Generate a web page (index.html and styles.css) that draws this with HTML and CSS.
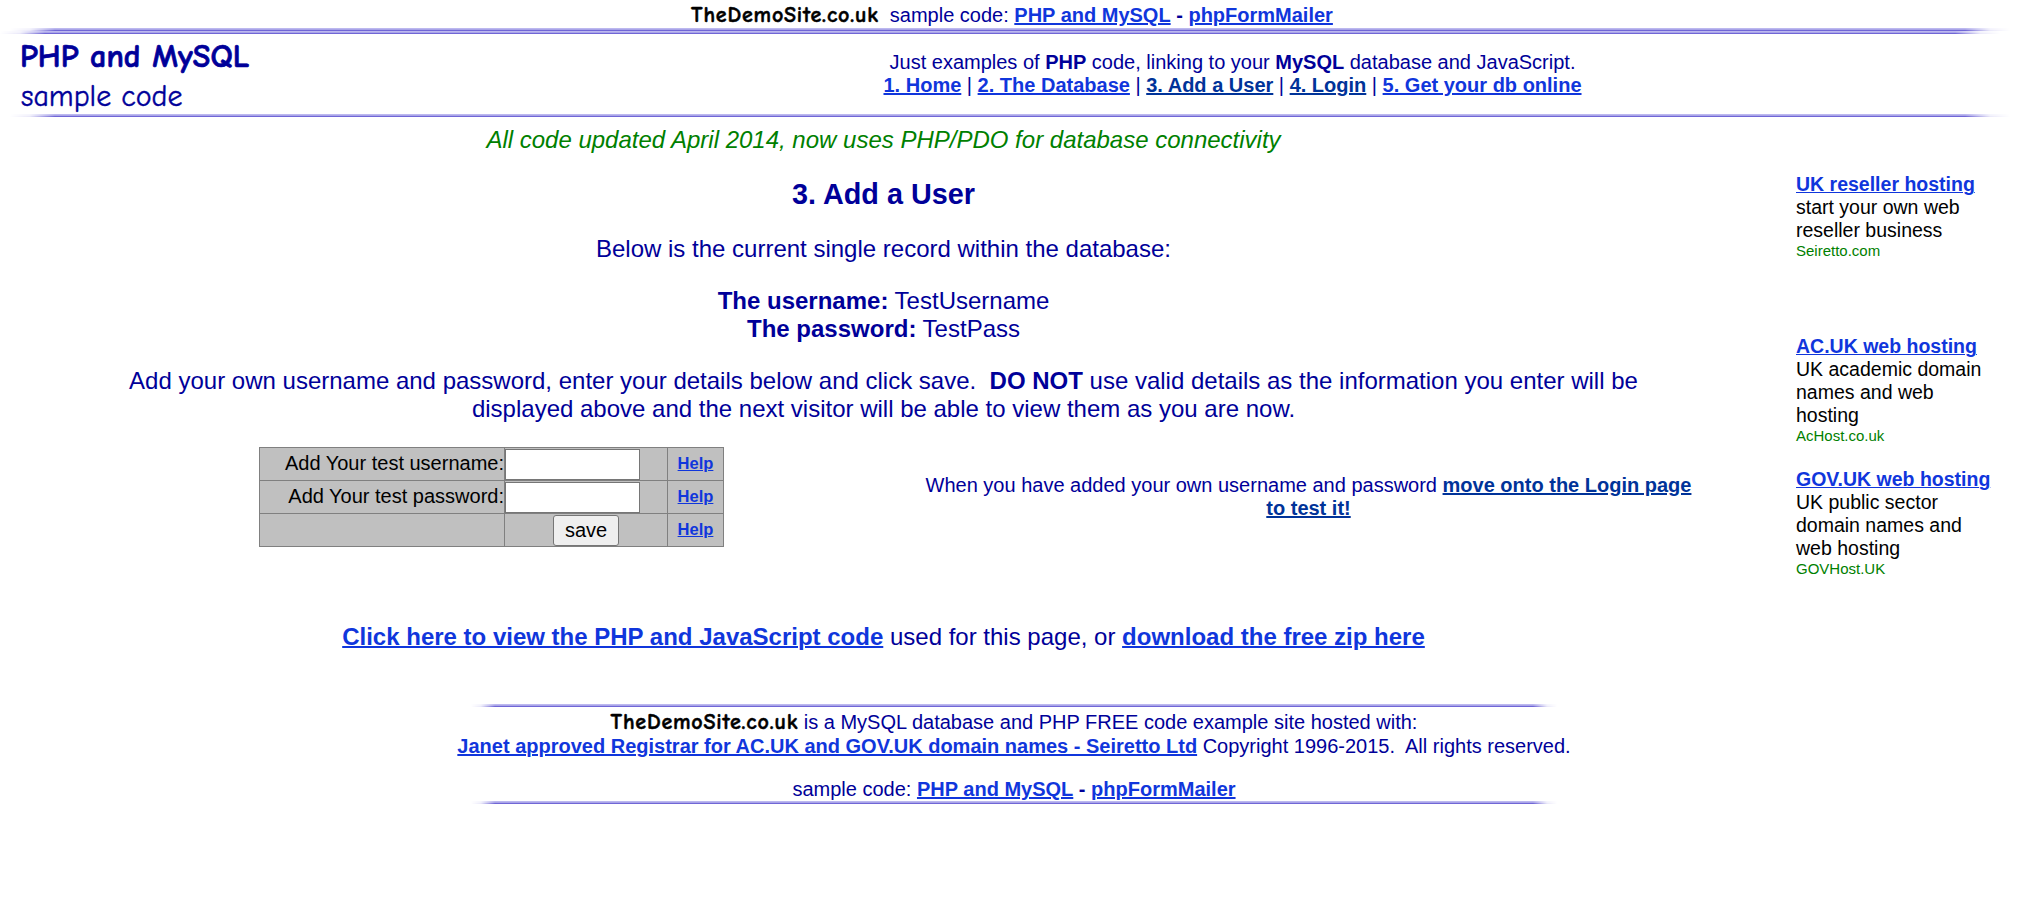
FILE: index.html
```html
<!DOCTYPE html>
<html lang="en">
<head>
<meta charset="utf-8">
<title>3. Add a User</title>
<link rel="stylesheet" href="styles.css">
</head>
<body>
<div class="topline"><span class="brand">TheDemoSite.co.uk</span>&nbsp; sample code: <a href="#">PHP and MySQL</a> <b>-</b> <a href="#">phpFormMailer</a></div>
<div class="rule rule-a"></div>
<div class="rule rule-b"></div>
<header class="header">
  <div class="logo"><div class="logo-main">PHP and MySQL</div><div class="logo-sub">sample code</div></div>
  <nav class="nav">
    <div class="intro">Just examples of <b>PHP</b> code, linking to your <b>MySQL</b> database and JavaScript.</div>
    <div class="links"><a href="#">1. Home</a> | <a href="#">2. The Database</a> | <a class="dark" href="#">3. Add a User</a> | <a class="dark" href="#">4. Login</a> | <a href="#">5. Get your db online</a></div>
  </nav>
</header>
<div class="rule rule-a"></div>
<div class="columns">
  <main class="main">
    <div class="notice">All code updated April 2014, now uses PHP/PDO for database connectivity</div>
    <h1 class="title">3. Add a User</h1>
    <p class="record-intro">Below is the current single record within the database:</p>
    <p class="record"><b>The username:</b> TestUsername<br><b>The password:</b> TestPass</p>
    <p class="instructions">Add your own username and password, enter your details below and click save.&nbsp; <b>DO NOT</b> use valid details as the information you enter will be<br>displayed above and the next visitor will be able to view them as you are now.</p>
    <div class="form-row">
      <form class="form">
        <table class="form-table">
          <tr><td class="label">Add Your test username:</td><td class="field"><input class="text" type="text"></td><td class="help"><a href="#">Help</a></td></tr>
          <tr><td class="label">Add Your test password:</td><td class="field"><input class="text" type="text"></td><td class="help"><a href="#">Help</a></td></tr>
          <tr><td class="label"></td><td class="submit"><button class="save" type="button">save</button></td><td class="help"><a href="#">Help</a></td></tr>
        </table>
      </form>
      <p class="next">When you have added your own username and password <a class="dark" href="#">move onto the Login page<br>to test it!</a></p>
    </div>
    <p class="source"><a href="#">Click here to view the PHP and JavaScript code</a> used for this page, or <a href="#">download the free zip here</a></p>
  </main>
  <aside class="ads">
    <div class="ad ad-first"><a href="#">UK reseller hosting</a><br>start your own web<br>reseller business<div class="site">Seiretto.com</div></div>
    <div class="ad ad-second"><a href="#">AC.UK web hosting</a><br>UK academic domain<br>names and web<br>hosting<div class="site">AcHost.co.uk</div></div>
    <div class="ad"><a href="#">GOV.UK web hosting</a><br>UK public sector<br>domain names and<br>web hosting<div class="site">GOVHost.UK</div></div>
  </aside>
</div>
<footer class="footer">
  <div class="rule rule-foot"></div>
  <div class="hosted"><span class="brand">TheDemoSite.co.uk</span> is a MySQL database and PHP FREE code example site hosted with:</div>
  <div class="rights"><a href="#">Janet approved Registrar for AC.UK and GOV.UK domain names - Seiretto Ltd</a> Copyright 1996-2015.&nbsp; All rights reserved.</div>
  <div class="samples">sample code: <a href="#">PHP and MySQL</a> <b>-</b> <a href="#">phpFormMailer</a></div>
  <div class="rule rule-foot"></div>
</footer>
</body>
</html>
```
FILE: styles.css
```css
* { box-sizing: border-box; }
body { margin: 0; padding-top: 4px; background: #fff; color: #009; font: 20px/23px "Liberation Sans", Arial, sans-serif; }
p, h1 { margin: 0; }
a { color: #1036dc; font-weight: bold; text-decoration: underline; text-decoration-thickness: 2px; text-underline-offset: 1px; }
a.dark { color: #003399; }

.topline { height: 24px; text-align: center; padding-right: 4px; white-space: nowrap; }
.brand { display: inline-block; line-height: 22px; color: #000; font-family: "Comic Sans MS", "Comic Neue", Lato, sans-serif; font-weight: bold; font-size: 22px; letter-spacing: 0.8px; -webkit-text-stroke: 0.5px #000; }

.rule { height: 3px; background: linear-gradient(#bcb8ef 0 1px, #a9a4e8 1px 2px, #7066d6 2px 3px); }
.rule-a { margin: 0 18px 0 10px; -webkit-mask-image: linear-gradient(90deg, transparent, rgba(0, 0, 0, .15) 20px, #000 45px, #000 calc(100% - 45px), rgba(0, 0, 0, .15) calc(100% - 20px), transparent); mask-image: linear-gradient(90deg, transparent, rgba(0, 0, 0, .15) 20px, #000 45px, #000 calc(100% - 45px), rgba(0, 0, 0, .15) calc(100% - 20px), transparent); }
.rule-b { margin: 0 28px 0 0; -webkit-mask-image: linear-gradient(90deg, transparent, rgba(0, 0, 0, .15) 20px, #000 45px, #000 calc(100% - 45px), rgba(0, 0, 0, .15) calc(100% - 20px), transparent); mask-image: linear-gradient(90deg, transparent, rgba(0, 0, 0, .15) 20px, #000 45px, #000 calc(100% - 45px), rgba(0, 0, 0, .15) calc(100% - 20px), transparent); }

.header { display: flex; height: 80px; }
.logo { width: 437px; padding: 3px 0 0 20px; font-family: "Comic Sans MS", "Comic Neue", Lato, sans-serif; white-space: nowrap; }
.logo-main { font-size: 32px; font-weight: bold; line-height: 40px; letter-spacing: 0.1px; -webkit-text-stroke: 0.7px #009; }
.logo-sub { padding-left: 1px; font-size: 30px; line-height: 40px; -webkit-text-stroke: 0.4px #009; }
.nav { flex: 1; padding-top: 17px; text-align: center; }

.columns { display: flex; }
.main { width: 1767px; padding-top: 9px; font-size: 24px; line-height: 28px; text-align: center; }
.notice { color: #008000; font-style: italic; }
.title { margin-top: 23px; font-size: 28.8px; line-height: 34px; }
.record-intro { margin-top: 24px; }
.record { margin-top: 24px; }
.instructions { margin-top: 24px; white-space: nowrap; }
.form-row { display: flex; margin-top: 24px; padding-left: 259px; }
.form-table { width: 465px; table-layout: fixed; border-collapse: collapse; background: #c0c0c0; color: #000; font-size: 20px; line-height: 23px; }
.form-table td { height: 33px; padding: 0; border: 1px solid #808080; }
.label { width: 245px; text-align: right; }
.form-table .label { padding-bottom: 2px; }
.field { width: 163px; text-align: left; }
.submit { text-align: center; }
.help { width: 56px; font-size: 16.5px; text-align: center; }
.form-table .help { padding-bottom: 2px; }
.help a { text-decoration-thickness: 1px; }
.text { display: block; width: 135px; height: 31px; border: 1px solid #767676; background: #fff; }
.save { display: block; width: 66px; height: 31px; margin: 0 auto; padding: 0; border: 1px solid #767676; border-radius: 3px; background: #efefef; color: #000; font: 20px "Liberation Sans", Arial, sans-serif; }
.next { flex: 1; padding: 27px 0 0 126px; font-size: 20px; line-height: 23px; }
.source { margin-top: 76px; }

.ads { padding: 56px 0 0 29px; color: #000; font-size: 19.5px; white-space: nowrap; }
.ad a { text-decoration-thickness: 1px; }
.site { color: #008000; font-size: 15px; line-height: 17px; height: 20px; }
.ad-first { margin-bottom: 73px; }
.ad-second { margin-bottom: 21px; }

.footer { width: 1130px; margin: 53px 0 0 449px; text-align: center; white-space: nowrap; }
.rule-foot { width: 1086px; margin: 0 auto; -webkit-mask-image: linear-gradient(90deg, transparent, rgba(0, 0, 0, .15) 10px, #000 24px, #000 calc(100% - 24px), rgba(0, 0, 0, .15) calc(100% - 10px), transparent); mask-image: linear-gradient(90deg, transparent, rgba(0, 0, 0, .15) 10px, #000 24px, #000 calc(100% - 24px), rgba(0, 0, 0, .15) calc(100% - 10px), transparent); }
.hosted { height: 24px; padding-top: 4px; }
.rights { height: 43px; padding-top: 4px; }
.samples { height: 27px; padding-top: 4px; }
```
